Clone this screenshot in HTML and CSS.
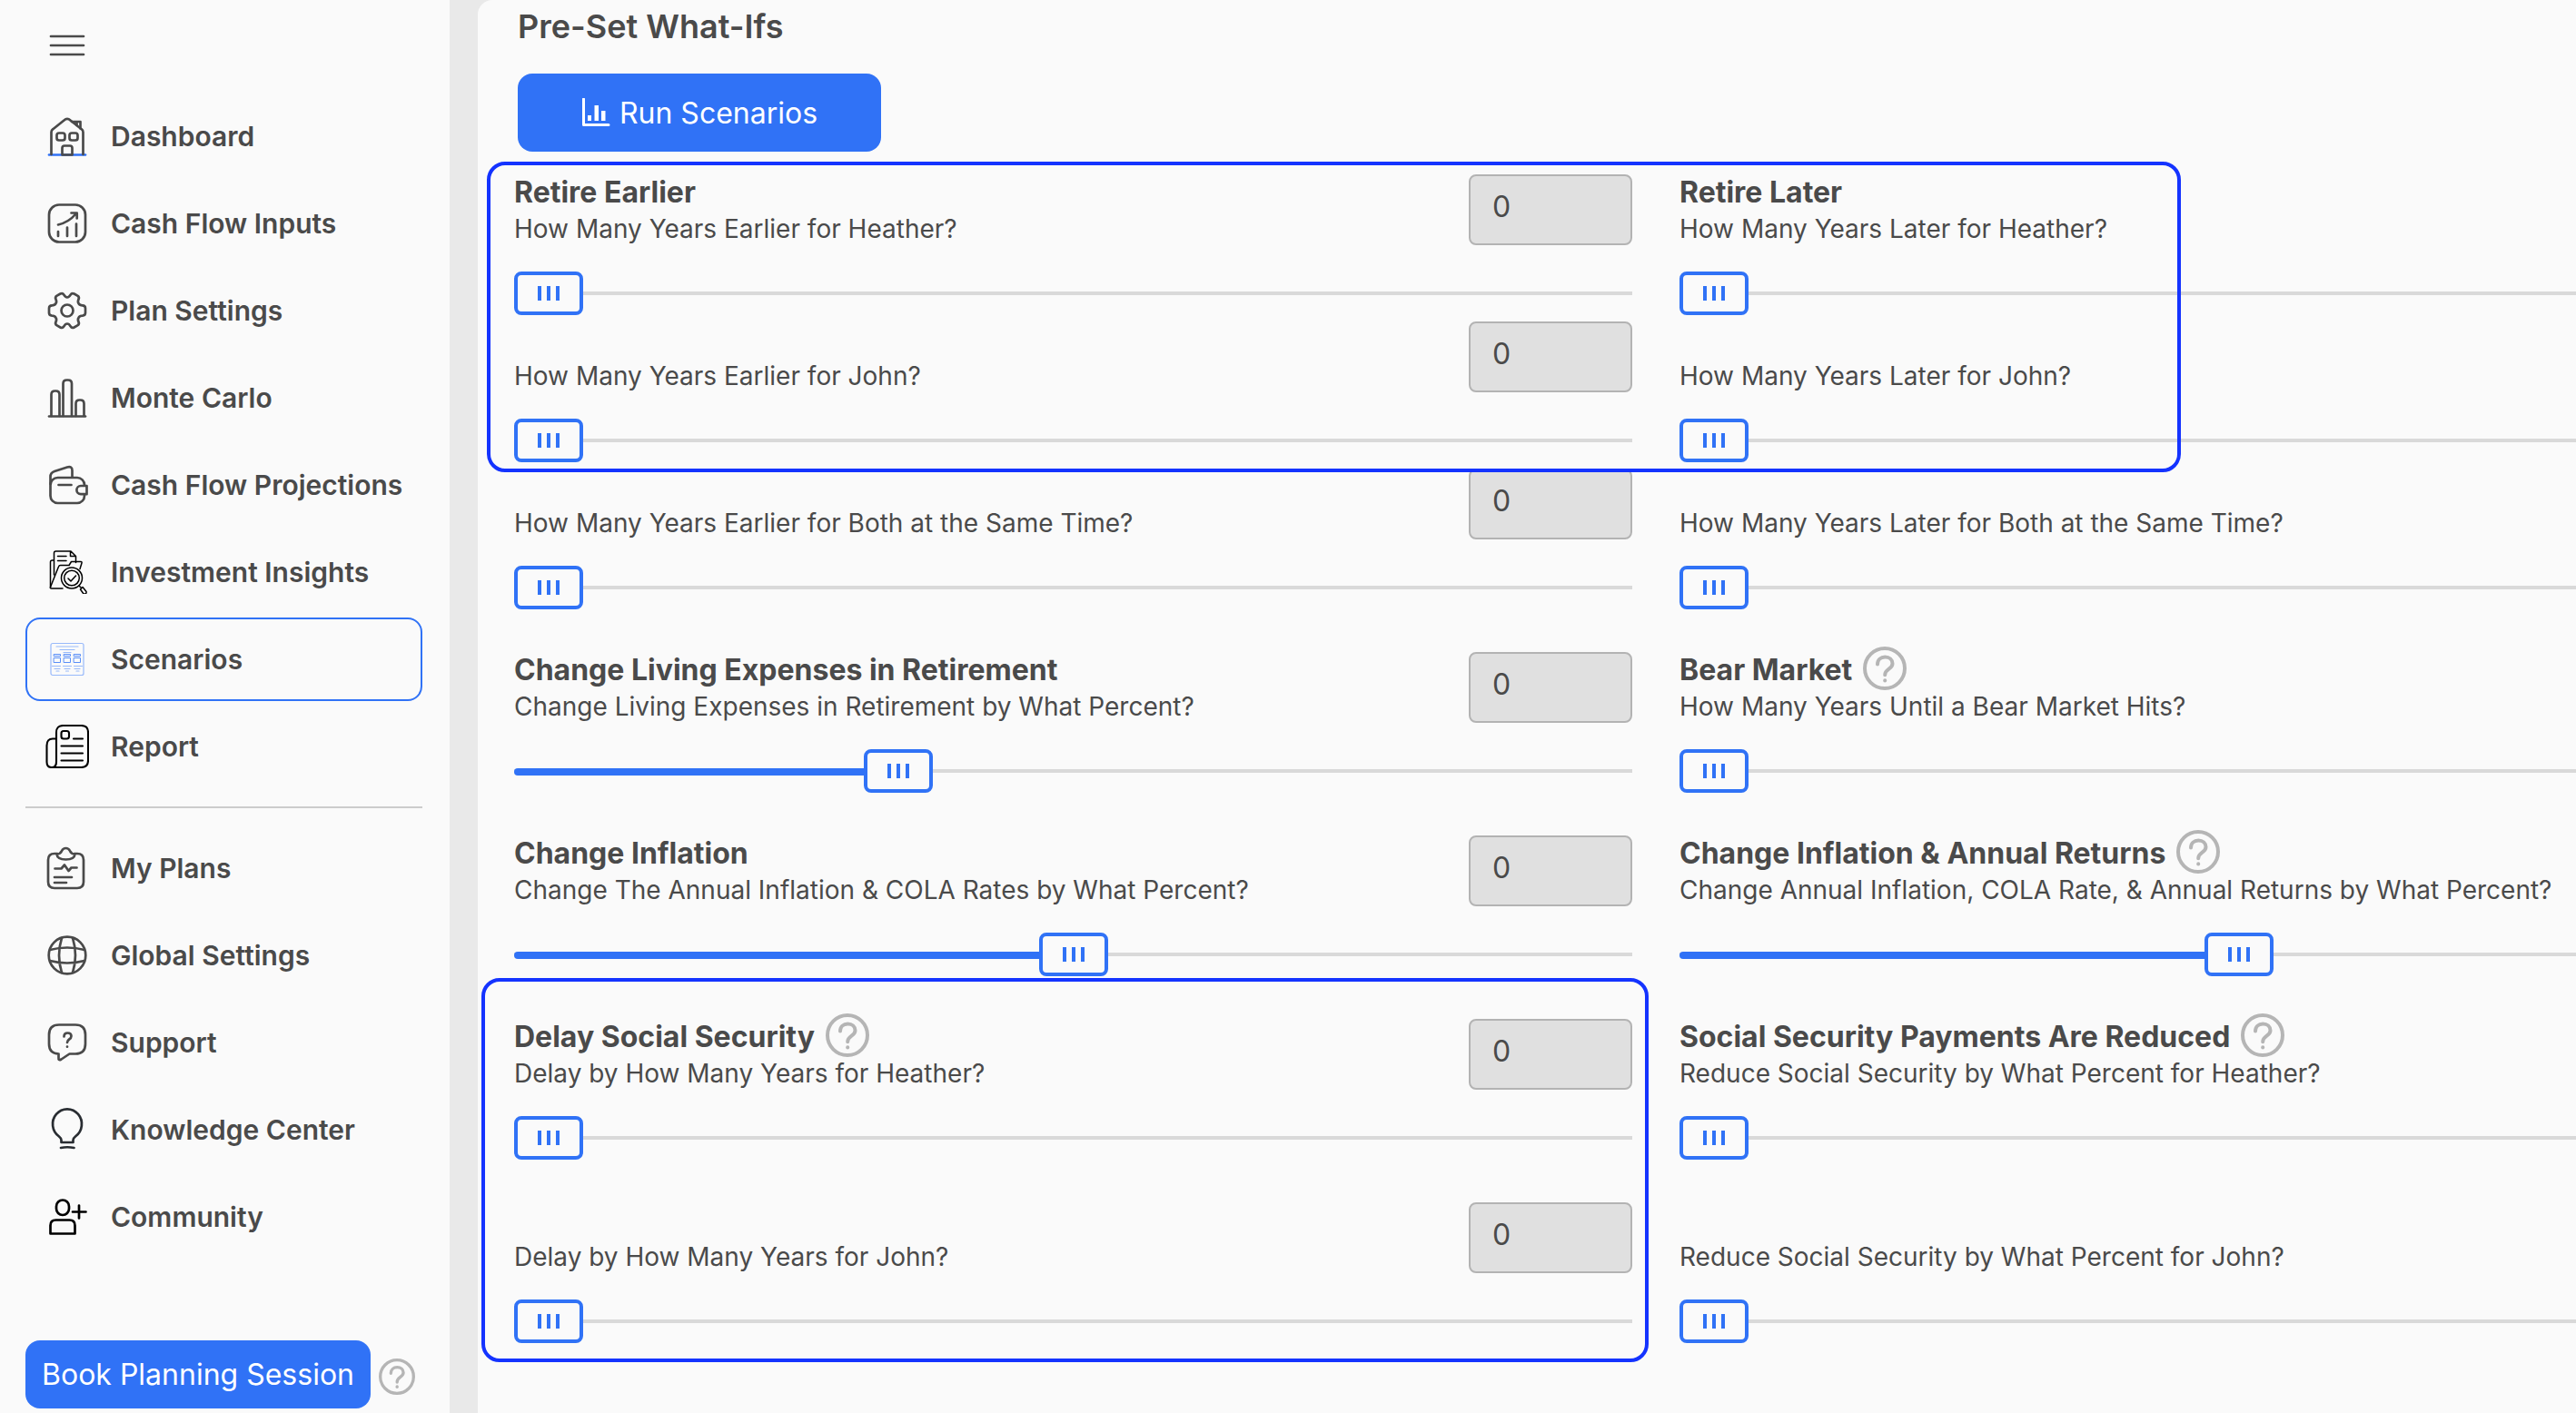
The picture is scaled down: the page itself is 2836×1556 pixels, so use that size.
FILE: index.html
```
<!DOCTYPE html>
<html lang="en">
<head>
    <meta charset="UTF-8">
    <meta name="viewport" content="width=device-width, initial-scale=1.0">
    <title>Scenarios</title>
    <link rel="stylesheet" href="styles.css">
</head>

<body>

    <!-- help icon used all over the page -->
    <svg class="defs" width="0" height="0">
        <symbol id="help" viewBox="0 0 48 48">
            <circle cx="24" cy="24" r="22" />
            <path d="M16 19.500c0-5 3.600-8 8.300-8s8.200 3 8.200 7.200c0 6.300-8.300 5.500-8.300 12.500" />
            <path d="M24.200 37.200v.4" />
        </symbol>
    </svg>

    <div class="app">

        <aside class="sidebar">
            <div class="menu-toggle">
                <svg width="48" height="48" viewBox="0 0 48 48"><path d="M6 14h36M6 24h36M6 34h36" /></svg>
            </div>

            <nav class="menu">
                <a class="menu-item">
                    <svg class="icon" viewBox="0 0 48 48">
                        <path class="line-blue" d="M4 44.500h40" />
                        <path d="M6.500 44V19.500c0-1.500.7-2.500 1.800-3.300L20.500 6.500c2.200-2 4.800-2 7 0l12.200 9.700c1.100.8 1.800 1.800 1.800 3.300V44" />
                        <path d="M29 8h9.500v7.500M34.500 9v3" />
                        <rect x="12.500" y="20.500" width="9" height="8" rx="2.500" />
                        <rect x="26.500" y="20.500" width="9" height="8" rx="2.500" />
                        <path d="M18.500 44.500V37c0-1.500 1-2.500 2.500-2.500h6c1.500 0 2.500 1 2.500 2.500v7.500z" />
                    </svg>
                    <span>Dashboard</span>
                </a>
                <a class="menu-item">
                    <svg class="icon" viewBox="0 0 48 48">
                        <rect x="4" y="3.500" width="40" height="41" rx="11" />
                        <path d="M14 38v-5M24 38V28.500M34 38V24.500" />
                        <path d="M14 25.500c8.500-2 14.500-6 19.500-12M28.500 12.500h6.200v6" />
                    </svg>
                    <span>Cash Flow Inputs</span>
                </a>
                <a class="menu-item">
                    <svg class="icon" viewBox="0 0 48 48">
                        <circle cx="24" cy="24" r="6.500" />
                        <path d="M24 9.500c1.800 0 2.600-1 3.600-2.800 1-1.700 2.400-2 4-1.200l3.700 2.100c1.600.9 2 2.300 1.200 4-.9 1.900-1 3.100.1 4.700 1 1.700 2.200 2.100 4.200 2.100 2 .1 3.200 1.100 3.200 3v5.200c0 1.900-1.200 2.900-3.200 3-2 0-3.200.4-4.200 2.100-1.100 1.600-1 2.800-.1 4.700.8 1.700.4 3.100-1.200 4l-3.700 2.100c-1.600.8-3 .5-4-1.200-1-1.800-1.800-2.800-3.600-2.800s-2.600 1-3.600 2.800c-1 1.700-2.400 2-4 1.200l-3.700-2.100c-1.600-.9-2-2.300-1.200-4 .9-1.900 1-3.100-.1-4.700-1-1.700-2.200-2.100-4.200-2.100-2-.1-3.200-1.100-3.200-3v-5.200c0-1.900 1.200-2.900 3.200-3 2 0 3.200-.4 4.200-2.100 1.100-1.600 1-2.800.1-4.700-.8-1.700-.4-3.100 1.200-4l3.700-2.100c1.600-.8 3-.5 4 1.200 1 1.800 1.800 2.800 3.600 2.800z" />
                    </svg>
                    <span>Plan Settings</span>
                </a>
                <a class="menu-item">
                    <svg class="icon" viewBox="0 0 48 48">
                        <path d="M4 44.500h40" />
                        <path d="M6.500 44V20.500q0-4 4-4h1q4 0 4 4V44M19.500 44V8.500q0-4 4-4h1.500q4 0 4 4V44M33.500 44V30.500q0-4 4-4h1q4 0 4 4V44" />
                    </svg>
                    <span>Monte Carlo</span>
                </a>
                <a class="menu-item">
                    <svg class="icon" viewBox="0 0 48 48">
                        <rect x="5.500" y="16" width="37.500" height="28" rx="8" />
                        <path d="M5.500 23V15c0-3 1.500-5 4.500-6l14-4.500c3.500-1 5.500.2 5.500 3.500v7.500M14.500 24H28.500" />
                        <path class="knockout" d="M45.500 25h-6.500a4.600 4.600 0 0 0 0 9.200h6.500z" />
                    </svg>
                    <span>Cash Flow Projections</span>
                </a>
                <a class="menu-item">
                    <svg class="icon thin black" viewBox="0 0 48 48">
                        <path d="M9.500 27V3q0-2 2-2h16.500l5.500 5.500v7M27.500 1v5.500h6M9.500 11h-2q-2 0-2 2v28M13.500 6.500H23M13.500 11.500H23" />
                        <path d="M19 42H6.500q-1.500 0-1-1.500L14.500 18q.5-1.500 2-1.500H26l2.500-4h10.500q1.500 0 1 1.500l-2 6.500" />
                        <circle class="knockout" cx="29" cy="30.500" r="11.500" />
                        <circle cx="29" cy="30.500" r="8.300" />
                        <path d="M25 31l3 3 5.500-6M37.500 39.500l2 2M38.500 43l2.500-2.500 4 5q.5 3-3 2.500z" />
                    </svg>
                    <span>Investment Insights</span>
                </a>
                <a class="menu-item active">
                    <svg class="icon" viewBox="0 0 48 48">
                        <g class="board">
                            <rect x="6" y="6.500" width="36" height="35" rx="2" />
                            <path d="M12 10h24M16 13.500h16M20 16.500h8M7.500 31.500h9M19.500 31.500h9M31.500 31.500h9M10 34.500h6M21 34.500h6M32 34.500h6M12 37h3M22.500 37h3M34 37h3" />
                        </g>
                        <path class="cells" d="M9.500 18.500h7v2h-7zM20.500 18.500h7v2h-7zM31.500 18.500h7v2h-7zM9.500 22.500h7v5h-7zM20.500 22.500h7v5h-7zM31.500 22.500h7v5h-7z" />
                    </svg>
                    <span>Scenarios</span>
                </a>
                <a class="menu-item">
                    <svg class="icon mid black" viewBox="0 0 48 48">
                        <path d="M12 41V8.500Q12 1 19.500 1H39.500Q47 1 47 8.500V39.500Q47 47 39.500 47H6.500Q1.500 47 1.500 41V23Q1.500 15.500 8 15.500H12M12 41Q12 47 7 47" />
                        <rect x="17.500" y="7" width="8.500" height="8.500" rx="2.500" />
                        <path d="M31 15.500h10M17.500 23.500h23.500M17.500 31.500h23.500M17.500 39.500h23.500" />
                    </svg>
                    <span>Report</span>
                </a>
            </nav>

            <hr class="divider">

            <nav class="menu">
                <a class="menu-item">
                    <svg class="icon" viewBox="0 0 48 48">
                        <path d="M13 8H10Q3 8 3 15v24q0 7 7 7h25q7 0 7-7V15q0-7-7-7h-3" />
                        <path d="M12.500 8.500q4 0 5.500-3.500 1.500-3 4.500-3t4.500 3q1.500 3.500 5.500 3.500-.5 6-10 6t-10-6z" />
                        <path d="M10.500 24.500h7l3.500-4 4.500 6.500 3-3.500h6M10 34h19M10 40h13" />
                    </svg>
                    <span>My Plans</span>
                </a>
                <a class="menu-item">
                    <svg class="icon" viewBox="0 0 48 48">
                        <circle cx="24" cy="24" r="20.300" />
                        <path d="M18 4.800q-6 19.200 0 38.400M30 4.800q6 19.200 0 38.400M5 18q19-5 38 0M5 30q19 5 38 0" />
                    </svg>
                    <span>Global Settings</span>
                </a>
                <a class="menu-item">
                    <svg class="icon" viewBox="0 0 48 48">
                        <path d="M15 4.500h18q11 0 11 11v10q0 11-11 11h-6.500l-9 6q-3.500 2-3-2V36.500Q4 36 4 25.500v-10q0-11 11-11z" />
                        <path d="M20.500 17.500q0-4 4-4t4 3.500q0 2-2.300 3.500-2.200 1.500-2.200 3.500M24 28.500v.2" />
                    </svg>
                    <span>Support</span>
                </a>
                <a class="menu-item">
                    <svg class="icon navy" viewBox="0 0 48 48">
                        <path d="M17.500 38v-2.500q0-2-2.500-4a16 16.500 0 1 1 18 0q-2.500 2-2.500 4V38zM17 44q7-1.500 14.500 0" />
                    </svg>
                    <span>Knowledge Center</span>
                </a>
                <a class="menu-item">
                    <svg class="icon black" viewBox="0 0 48 48">
                        <rect x="12" y="5.500" width="14" height="16.500" rx="7" />
                        <path d="M5.500 42.500V33.500q0-6 6-6h15q6 0 6 6v9zM30 18.500h14.500M37 11.500v14" />
                    </svg>
                    <span>Community</span>
                </a>
            </nav>

            <div class="sidebar-footer">
                <button class="btn btn-book">Book Planning Session</button>
                <svg class="help help-small"><use href="#help" /></svg>
            </div>
        </aside>

        <main class="content">
            <h1>Pre-Set What-Ifs</h1>
            <button class="btn btn-run">
                <svg width="32" height="32" viewBox="0 0 32 32">
                    <path d="M2.500 1v28.500H30" />
                    <path class="bars" d="M7 19h4v6H7zM14.500 8H19v17h-4.500zM22 14h4.500v11H22z" />
                </svg>
                Run Scenarios
            </button>

            <div class="columns">
                <div class="column">
                    <div class="field tight">
                        <div class="field-top">
                            <div class="label"><h2>Retire Earlier</h2><p>How Many Years Earlier for Heather?</p></div>
                            <div class="value">0</div>
                        </div>
                        <div class="slider"><div class="thumb"></div></div>
                    </div>
                    <div class="field tight">
                        <div class="field-top">
                            <div class="label"><p>How Many Years Earlier for John?</p></div>
                            <div class="value">0</div>
                        </div>
                        <div class="slider"><div class="thumb"></div></div>
                    </div>
                    <div class="field">
                        <div class="field-top">
                            <div class="label"><p>How Many Years Earlier for Both at the Same Time?</p></div>
                            <div class="value">0</div>
                        </div>
                        <div class="slider"><div class="thumb"></div></div>
                    </div>
                    <div class="field">
                        <div class="field-top">
                            <div class="label"><h2>Change Living Expenses in Retirement</h2><p>Change Living Expenses in Retirement by What Percent?</p></div>
                            <div class="value">0</div>
                        </div>
                        <div class="slider"><div class="fill" style="width: 385px"></div><div class="thumb"></div></div>
                    </div>
                    <div class="field">
                        <div class="field-top">
                            <div class="label"><h2>Change Inflation</h2><p>Change The Annual Inflation &amp; COLA Rates by What Percent?</p></div>
                            <div class="value">0</div>
                        </div>
                        <div class="slider"><div class="fill" style="width: 578px"></div><div class="thumb"></div></div>
                    </div>
                    <div class="field">
                        <div class="field-top">
                            <div class="label"><h2>Delay Social Security <svg class="help"><use href="#help" /></svg></h2><p>Delay by How Many Years for Heather?</p></div>
                            <div class="value">0</div>
                        </div>
                        <div class="slider"><div class="thumb"></div></div>
                    </div>
                    <div class="field">
                        <div class="field-top">
                            <div class="label"><p>Delay by How Many Years for John?</p></div>
                            <div class="value">0</div>
                        </div>
                        <div class="slider"><div class="thumb"></div></div>
                    </div>
                </div>

                <div class="column">
                    <div class="field tight">
                        <div class="field-top">
                            <div class="label"><h2>Retire Later</h2><p>How Many Years Later for Heather?</p></div>
                        </div>
                        <div class="slider"><div class="thumb"></div></div>
                    </div>
                    <div class="field tight">
                        <div class="field-top">
                            <div class="label"><p>How Many Years Later for John?</p></div>
                        </div>
                        <div class="slider"><div class="thumb"></div></div>
                    </div>
                    <div class="field">
                        <div class="field-top">
                            <div class="label"><p>How Many Years Later for Both at the Same Time?</p></div>
                        </div>
                        <div class="slider"><div class="thumb"></div></div>
                    </div>
                    <div class="field">
                        <div class="field-top">
                            <div class="label"><h2>Bear Market <svg class="help"><use href="#help" /></svg></h2><p>How Many Years Until a Bear Market Hits?</p></div>
                        </div>
                        <div class="slider"><div class="thumb"></div></div>
                    </div>
                    <div class="field">
                        <div class="field-top">
                            <div class="label"><h2>Change Inflation &amp; Annual Returns <svg class="help"><use href="#help" /></svg></h2><p>Change Annual Inflation, COLA Rate, &amp; Annual Returns by What Percent?</p></div>
                        </div>
                        <div class="slider"><div class="fill" style="width: 578px"></div><div class="thumb"></div></div>
                    </div>
                    <div class="field">
                        <div class="field-top">
                            <div class="label"><h2>Social Security Payments Are Reduced <svg class="help"><use href="#help" /></svg></h2><p>Reduce Social Security by What Percent for Heather?</p></div>
                        </div>
                        <div class="slider"><div class="thumb"></div></div>
                    </div>
                    <div class="field">
                        <div class="field-top">
                            <div class="label"><p>Reduce Social Security by What Percent for John?</p></div>
                        </div>
                        <div class="slider"><div class="thumb"></div></div>
                    </div>
                </div>
            </div>

            <!-- frames drawn over the fields -->
            <div class="frame frame-retire"></div>
            <div class="frame frame-social"></div>
        </main>

    </div>

</body>
</html>
```
FILE: styles.css
```
* {
    box-sizing: border-box;
}

body {
    margin: 0;
    font-family: Inter, "Liberation Sans", sans-serif;
    color: #4a4a4a;
    background: #e9e9e9;
    overflow: hidden;
}

h1, h2, p {
    margin: 0;
}

svg {
    fill: none;
    stroke: #4a4a4a;
    stroke-width: 2.7;
    stroke-linecap: round;
    stroke-linejoin: round;
    flex-shrink: 0;
}

.defs {
    display: none;
}

.app {
    display: flex;
    gap: 31px;
    height: 1556px;
}

/* sidebar */

.sidebar {
    width: 495px;
    flex-shrink: 0;
    padding: 26px 30px 0 28px;
    display: flex;
    flex-direction: column;
    background: #fafafa;
}

.menu-toggle {
    height: 78px;
    padding-left: 22px;
}

.menu {
    display: flex;
    flex-direction: column;
    gap: 4px;
}

.menu-item {
    height: 92px;
    display: flex;
    align-items: center;
    gap: 24px;
    padding-left: 20px;
    border: 2px solid transparent;
    border-radius: 16px;
    font-size: 30px;
    font-weight: 600;
}

.menu-item.active {
    border-color: #3072f6;
}

.icon {
    width: 48px;
    height: 48px;
}

.icon.thin {
    stroke-width: 1.5;
}

.icon.mid {
    stroke-width: 2.1;
}

.icon.black {
    stroke: #000;
}

.icon.navy {
    stroke: #292d32;
}

.line-blue {
    stroke: #3072f6;
}

.knockout {
    fill: #fafafa;
}

.board {
    stroke: #98b9fa;
    stroke-width: 1.2;
}

.cells {
    stroke: #5a8ff8;
    stroke-width: 1;
    stroke-linejoin: miter;
}

.divider {
    width: 100%;
    height: 2px;
    margin: 20px 0;
    border: 0;
    background: #cccccc;
}

.sidebar-footer {
    display: flex;
    align-items: center;
    gap: 9px;
    margin-top: 90px;
}

.btn {
    display: flex;
    align-items: center;
    justify-content: center;
    padding: 0;
    border: 0;
    background: #3072f6;
    color: #fff;
    font-family: inherit;
    font-size: 32px;
    font-weight: 400;
    white-space: nowrap;
}

.btn-book {
    width: 380px;
    height: 75px;
    border-radius: 16px;
}

.help {
    width: 48px;
    height: 48px;
    stroke: #b5b5b5;
    stroke-width: 4;
}

.help-small {
    width: 40px;
    height: 40px;
    margin-top: 5px;
}

/* scenarios */

.content {
    position: relative;
    flex: 1;
    min-width: 0;
    padding: 5px 0 0 40px;
    overflow: hidden;
    background: #fafafa;
    border-top-left-radius: 16px;
}

h1 {
    padding-left: 4px;
    font-size: 36px;
    font-weight: 600;
    line-height: 48px;
}

.btn-run {
    width: 400px;
    height: 86px;
    margin: 28px 0 25px 4px;
    gap: 10px;
    border-radius: 16px;
}

.btn-run svg {
    stroke: #fff;
    stroke-width: 3;
}

.btn-run .bars {
    fill: #fff;
    stroke: none;
}

.columns {
    display: grid;
    grid-template-columns: 1231px 1231px;
    column-gap: 52px;
}

.field {
    margin-bottom: 47px;
}

.field.tight {
    margin-bottom: 7px;
}

.field-top {
    height: 81px;
    display: flex;
    justify-content: space-between;
}

.label {
    display: flex;
    flex-direction: column;
    justify-content: flex-end;
}

h2 {
    height: 39px;
    display: flex;
    align-items: center;
    gap: 12px;
    font-size: 32px;
    font-weight: 700;
    white-space: nowrap;
}

h2 .help {
    margin-top: -3px;
}

.label p {
    font-size: 28px;
    line-height: 42px;
    white-space: nowrap;
}

.value {
    width: 180px;
    height: 78px;
    padding: 0 24px;
    border: 2px solid #b3b3b3;
    border-radius: 8px;
    background: #e0e0e0;
    font-size: 32px;
    line-height: 68px;
}

.slider {
    height: 48px;
    margin-top: 26px;
    display: flex;
    align-items: center;
    background: linear-gradient(#d9d9d9, #d9d9d9) 0 22px / 100% 4px no-repeat;
}

.fill {
    height: 8px;
    margin-top: 2px;
    border-radius: 4px 0 0 4px;
    background: #3072f6;
}

.thumb {
    width: 76px;
    height: 48px;
    border: 4px solid #3072f6;
    border-radius: 8px;
    background:
        linear-gradient(#3072f6, #3072f6) 22px 12px / 4px 16px no-repeat,
        linear-gradient(#3072f6, #3072f6) 32px 12px / 4px 16px no-repeat,
        linear-gradient(#3072f6, #3072f6) 42px 12px / 4px 16px no-repeat,
        #fafafa;
}

.frame {
    position: absolute;
    border: 4px solid #1433ff;
    border-radius: 20px;
}

.frame-retire {
    left: 10px;
    top: 178px;
    width: 1865px;
    height: 342px;
}

.frame-social {
    left: 4px;
    top: 1077px;
    width: 1285px;
    height: 423px;
}
```
